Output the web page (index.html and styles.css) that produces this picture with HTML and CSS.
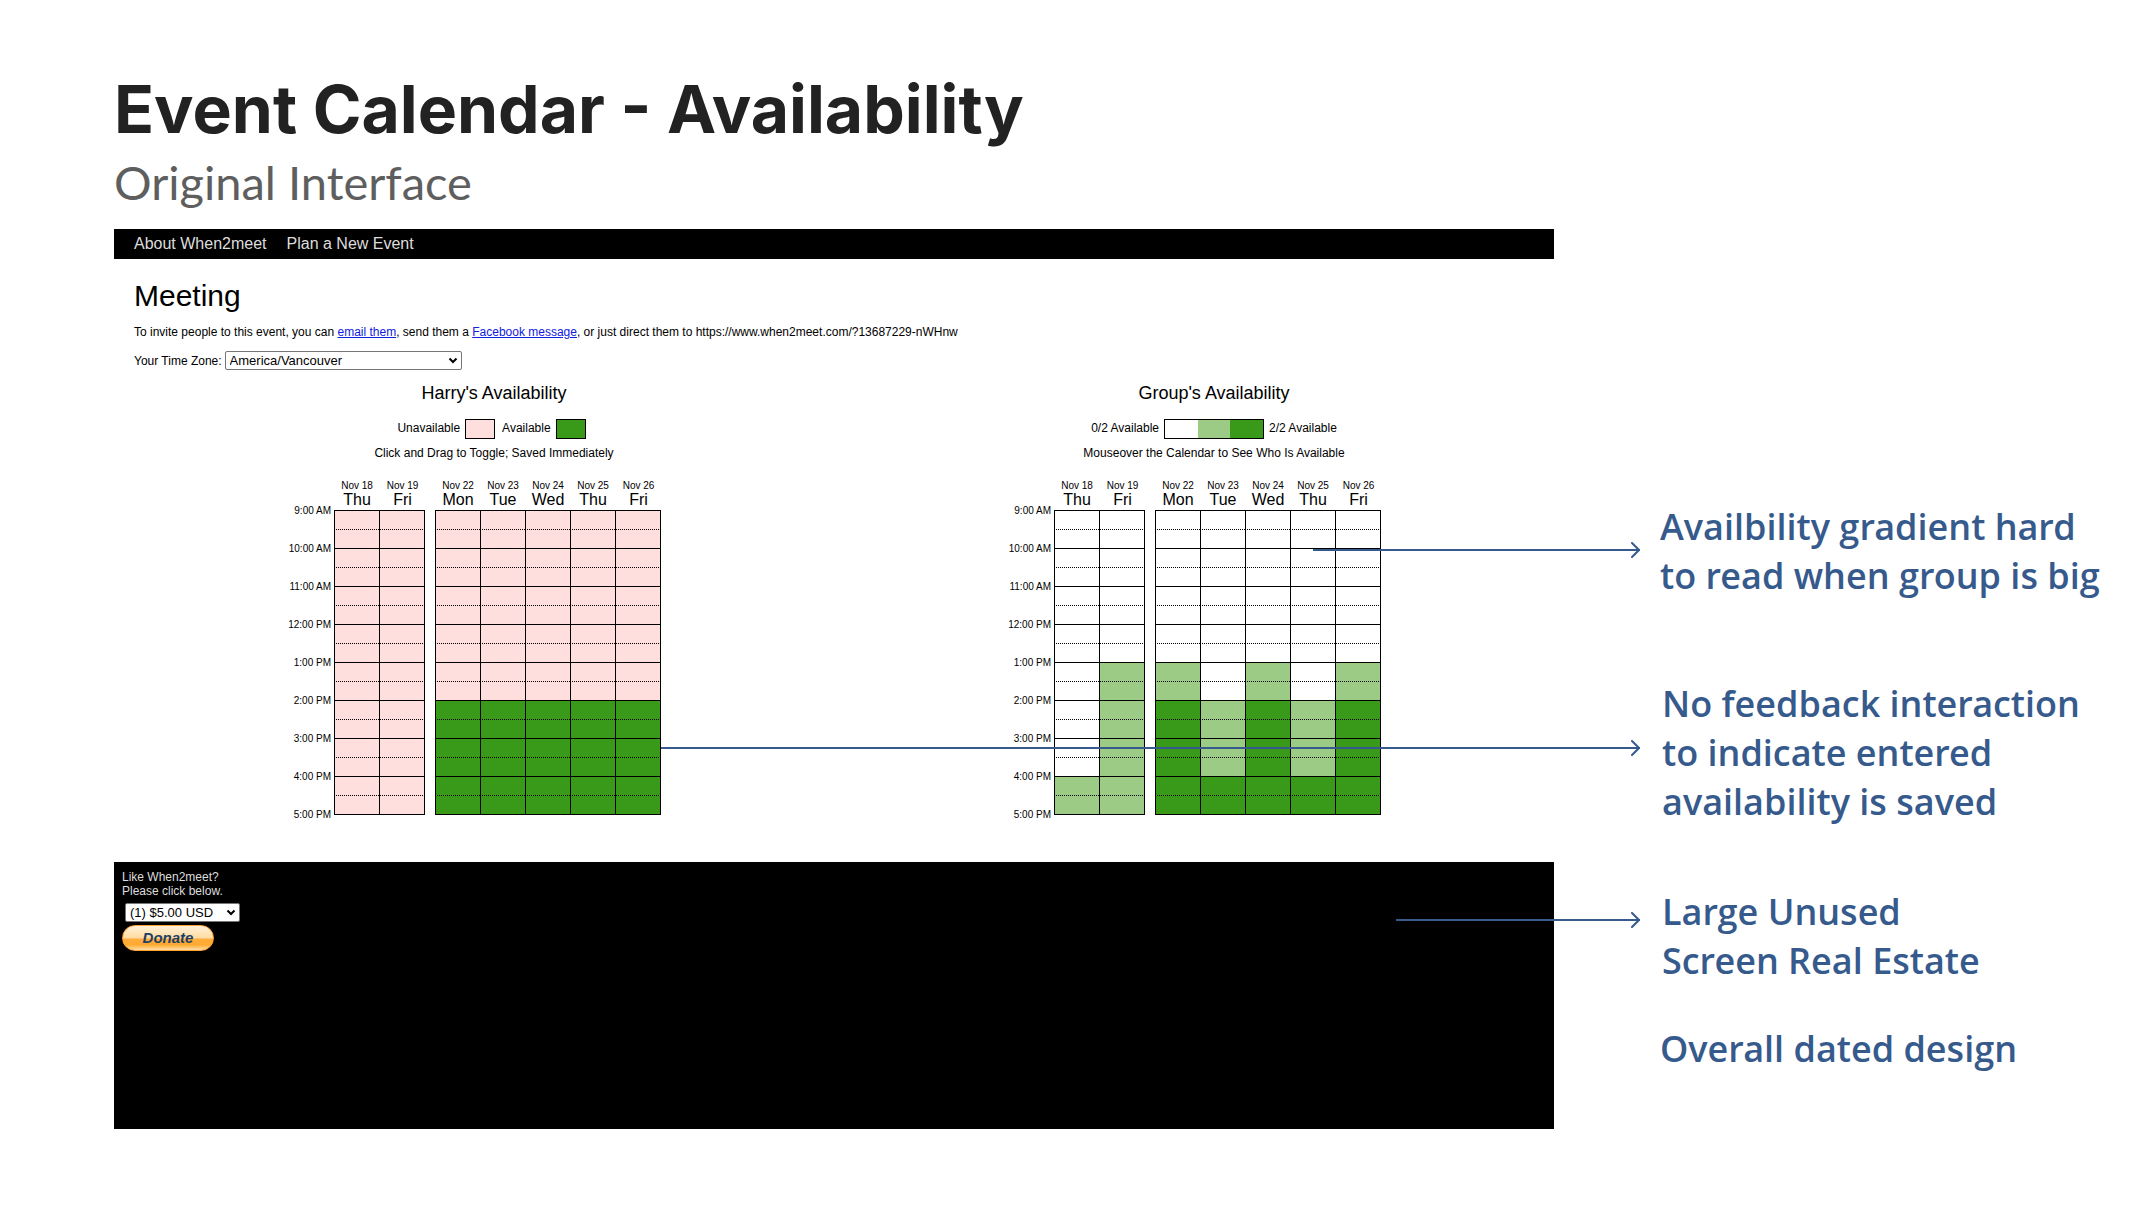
FILE: index.html
```html
<!DOCTYPE html>
<html lang="en">
<head>
<meta charset="utf-8">
<title>Event Calendar - Availability</title>
<link rel="stylesheet" href="styles.css">
</head>
<body>
<div class="slide">
  <header class="slide-header">
    <h1 class="slide-title">Event Calendar - Availability</h1>
    <p class="slide-subtitle">Original Interface</p>
  </header>

  <div class="slide-body">
    <section class="app">
      <nav class="app-nav">
        <a href="#about">About When2meet</a>
        <a href="#new">Plan a New Event</a>
      </nav>

      <main class="app-main">
        <h2 class="event-name">Meeting</h2>
        <p class="invite">To invite people to this event, you can <a href="#email">email them</a>, send them a <a href="#facebook">Facebook message</a>, or just direct them to https://www.when2meet.com/?13687229-nWHnw</p>
        <div class="zone">
          <label for="zone">Your Time Zone:</label>
          <span class="select select-zone">
            <select id="zone"><option>America/Vancouver</option></select>
            <svg class="chevron" viewBox="0 0 10 7" aria-hidden="true"><path d="M1.5 1.5 5 5l3.5-3.5"/></svg>
          </span>
        </div>

        <div class="calendars">
          <section class="calendar">
            <h3 class="calendar-title">Harry's Availability</h3>
            <div class="legend legend-own">
              <span>Unavailable</span><span class="swatch"><i class="busy"></i></span>
              <span class="legend-next">Available</span><span class="swatch"><i class="full"></i></span>
            </div>
            <p class="hint">Click and Drag to Toggle; Saved Immediately</p>
            <table class="grid" id="own-grid"></table>
          </section>

          <section class="calendar">
            <h3 class="calendar-title">Group's Availability</h3>
            <div class="legend">
              <span>0/2 Available</span><span class="swatch swatch-scale"><i class="none"></i><i class="half"></i><i class="full"></i></span><span>2/2 Available</span>
            </div>
            <p class="hint">Mouseover the Calendar to See Who Is Available</p>
            <table class="grid" id="group-grid"></table>
          </section>
        </div>
      </main>

      <footer class="app-footer">
        <label for="amount">Like When2meet?<br>Please click below.</label>
        <span class="select select-amount">
          <select id="amount"><option>(1) $5.00 USD</option></select>
          <svg class="chevron" viewBox="0 0 10 7" aria-hidden="true"><path d="M1.5 1.5 5 5l3.5-3.5"/></svg>
        </span>
        <button class="donate" type="button">Donate</button>
      </footer>
    </section>

    <aside class="notes">
      <p class="note note-gradient">
        <span class="arrow"><svg viewBox="0 0 9 16" aria-hidden="true"><path d="M1 1l7 7-7 7"/></svg></span>
        Availbility gradient hard<br>to read when group is big
      </p>
      <p class="note note-feedback">
        <span class="arrow"><svg viewBox="0 0 9 16" aria-hidden="true"><path d="M1 1l7 7-7 7"/></svg></span>
        No feedback interaction<br>to indicate entered<br>availability is saved
      </p>
      <p class="note note-space">
        <span class="arrow"><svg viewBox="0 0 9 16" aria-hidden="true"><path d="M1 1l7 7-7 7"/></svg></span>
        Large Unused<br>Screen Real Estate
      </p>
      <p class="note note-dated">Overall dated design</p>
    </aside>
  </div>
</div>
<script src="script.js"></script>
</body>
</html>
```

FILE: styles.css
```css
* {
  box-sizing: border-box;
}

body {
  margin: 0;
  background: #fff;
  color: #000;
  font-family: "Liberation Sans", Arial, sans-serif;
  font-size: 12px;
  line-height: 14px;
}

h1, h2, h3, p {
  margin: 0;
  font-weight: 400;
}

.slide {
  padding: 69px 0 77px 114px;
}

.slide-header {
  display: flex;
  flex-direction: column;
  gap: 4px;
  margin-bottom: 18px;
}

.slide-title {
  color: #222;
  font-family: Inter, sans-serif;
  font-size: 66px;
  font-weight: 700;
  line-height: 80px;
}

.slide-subtitle {
  color: #5e5e5e;
  font-family: Lato, sans-serif;
  font-size: 47px;
  line-height: 58px;
}

.slide-body {
  display: grid;
  grid-template-columns: minmax(0, 1fr) 474px;
  column-gap: 106px;
}

/* Scheduling app */

.app {
  display: flex;
  flex-direction: column;
}

.app-nav {
  display: flex;
  gap: 20px;
  padding: 6px 20px;
  background: #000;
  font-size: 16px;
  line-height: 18px;
}

.app-nav a {
  color: #ddd;
  text-decoration: none;
}

.app-main {
  padding: 19px 0 41px;
}

.event-name,
.invite,
.zone {
  margin-left: 20px;
}

.event-name {
  margin-bottom: 11px;
  font-size: 30px;
  line-height: 36px;
}

.invite {
  margin-bottom: 12px;
}

.invite a {
  color: #1020e0;
}

.zone {
  display: flex;
  align-items: center;
  gap: 3px;
}

.select {
  position: relative;
  display: flex;
  height: 19px;
}

.select-zone {
  width: 237px;
}

.select-amount {
  width: 115px;
  margin: 5px 0 3px 3px;
}

.select select {
  width: 100%;
  margin: 0;
  padding: 0 4px;
  border: 1px solid #767676;
  border-radius: 2px;
  appearance: none;
  background: #fff;
  color: #000;
  font-family: inherit;
  font-size: 13px;
}

.chevron {
  position: absolute;
  top: 6px;
  right: 4px;
  width: 10px;
  height: 7px;
  fill: none;
  stroke: #000;
  stroke-width: 2;
  pointer-events: none;
}

.calendars {
  display: grid;
  grid-template-columns: 1fr 1fr;
  margin-top: 13px;
}

.calendar {
  display: flex;
  flex-direction: column;
  align-items: center;
  padding-left: 40px;
}

.calendar-title {
  margin-bottom: 16px;
  font-size: 18px;
  line-height: 20px;
}

.legend {
  display: flex;
  align-items: flex-start;
  gap: 5px;
  margin-bottom: 7px;
  line-height: 18px;
}

.legend-own {
  padding-right: 5px;
}

.legend-next {
  margin-left: 2px;
}

.swatch {
  display: flex;
  width: 30px;
  height: 20px;
  border: 1px solid #000;
}

.swatch-scale {
  width: 100px;
}

.swatch i {
  flex: 1;
}

.hint {
  margin-bottom: 19px;
}

.none { background: #fff; }
.busy { background: #ffdede; }
.half { background: #9bcb84; }
.full { background: #389a18; }

.grid {
  width: 380px;
  margin-right: 46px;
  border-spacing: 0;
  table-layout: fixed;
}

.grid th,
.grid td {
  padding: 0;
  font-weight: 400;
}

.time-col { width: 53px; }
.day-col { width: 45px; }
.day-col-last { width: 46px; }
.gap-col { width: 10px; }

.grid thead th {
  padding: 1px 0 1px 1px;
}

.date {
  display: block;
  font-size: 10px;
  line-height: 11px;
}

.day {
  display: block;
  font-size: 16px;
  line-height: 18px;
}

.time {
  vertical-align: top;
  text-align: right;
}

.time span {
  display: block;
  margin: -5px 3px 0 0;
  font-size: 10px;
  line-height: 12px;
}

.slot {
  height: 19px;
  border-top: 1px dotted #000;
  border-left: 1px solid #000;
}

.slot-hour {
  border-top-style: solid;
}

.slot-last {
  border-right: 1px solid #000;
}

.edge {
  border-top: 1px solid #000;
}

.app-footer {
  display: flex;
  flex-direction: column;
  align-items: flex-start;
  min-height: 267px;
  padding: 8px;
  background: #000;
  color: #ddd;
}

.donate {
  width: 92px;
  height: 26px;
  padding: 0;
  border: 1px solid #ffa030;
  border-radius: 13px;
  background: linear-gradient(#fff1d8 0%, #ffdca4 48%, #ffac3c 56%, #ffa930 78%, #ffe0a8 100%);
  color: #1c3f66;
  font-family: inherit;
  font-size: 15px;
  font-style: italic;
  font-weight: 700;
  line-height: 24px;
}

/* Annotations */

.notes {
  padding-top: 273px;
  color: #365a8c;
  font-family: "Open Sans SemiBold", "Open Sans", sans-serif;
  font-size: 36px;
  line-height: 49px;
  white-space: nowrap;
}

.note {
  position: relative;
}

.note-gradient { margin-bottom: 79px; }
.note-feedback { margin-bottom: 61px; }
.note-space { margin-bottom: 39px; }

.note-feedback,
.note-space {
  padding-left: 2px;
}

.arrow {
  position: absolute;
  right: 100%;
  height: 2px;
  margin-right: 20px;
  background: #365a8c;
}

.arrow svg {
  position: absolute;
  top: -7px;
  right: 0;
  width: 9px;
  height: 16px;
  fill: none;
  stroke: #365a8c;
  stroke-width: 2;
  stroke-linecap: round;
}

.note-gradient .arrow { top: 47px; width: 327px; }
.note-feedback .arrow { top: 68px; width: 979px; }
.note-space .arrow { top: 32px; width: 244px; }
```

FILE: script.js
```js
const days = [
  ["Nov 18", "Thu"], ["Nov 19", "Fri"], null,
  ["Nov 22", "Mon"], ["Nov 23", "Tue"], ["Nov 24", "Wed"], ["Nov 25", "Thu"], ["Nov 26", "Fri"],
];
const hours = ["9:00 AM", "10:00 AM", "11:00 AM", "12:00 PM", "1:00 PM", "2:00 PM", "3:00 PM", "4:00 PM", "5:00 PM"];

// One string per day, one letter per hour from 9 AM: b busy, n nobody, h half, f full.
const shades = { b: "busy", n: "none", h: "half", f: "full" };
const own = ["bbbbbbbb", "bbbbbbbb", null, "bbbbbfff", "bbbbbfff", "bbbbbfff", "bbbbbfff", "bbbbbfff"];
const group = ["nnnnnnnh", "nnnnhhhh", null, "nnnnhfff", "nnnnnhhf", "nnnnhfff", "nnnnnhhf", "nnnnhfff"];

const isLast = (i) => i === days.length - 1 || days[i + 1] === null;

function render(id, data) {
  let html = '<colgroup><col class="time-col">';
  html += days.map((d, i) => `<col class="${!d ? "gap-col" : isLast(i) ? "day-col-last" : "day-col"}">`).join("");
  html += "</colgroup><thead><tr><td></td>";
  html += days.map((d) => (d ? `<th scope="col"><span class="date">${d[0]}</span><span class="day">${d[1]}</span></th>` : "<td></td>")).join("");
  html += "</tr></thead><tbody>";
  for (let half = 0; half < 16; half++) {
    const hour = Math.floor(half / 2);
    const onHour = half % 2 === 0;
    html += "<tr>";
    if (onHour) html += `<th class="time" scope="row" rowspan="2"><span>${hours[hour]}</span></th>`;
    html += days.map((d, i) => (d
      ? `<td class="slot${onHour ? " slot-hour" : ""}${isLast(i) ? " slot-last" : ""} ${shades[data[i][hour]]}"></td>`
      : "<td></td>")).join("");
    html += "</tr>";
  }
  html += `<tr><th class="time" scope="row"><span>${hours[8]}</span></th>`;
  html += days.map((d) => (d ? '<td class="edge"></td>' : "<td></td>")).join("");
  html += "</tr></tbody>";
  document.getElementById(id).innerHTML = html;
}

render("own-grid", own);
render("group-grid", group);
```
